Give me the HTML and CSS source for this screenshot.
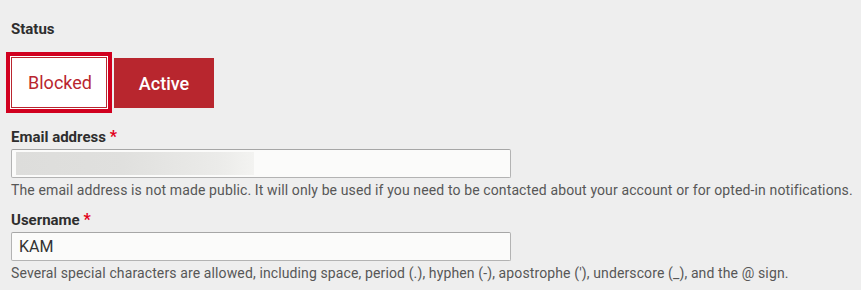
FILE: index.html
```html
<!DOCTYPE html>
<html lang="en">
<head>
<meta charset="utf-8">
<title>Account</title>
<link rel="stylesheet" href="styles.css">
</head>
<body>
<form class="form">
  <div class="field">
    <div class="label">Status</div>
    <div class="toggle">
      <button type="button" class="btn btn-blocked">Blocked</button>
      <button type="button" class="btn btn-active">Active</button>
    </div>
  </div>
  <div class="field field-email">
    <label class="label">Email address <span class="req">*</span></label>
    <div class="input"><span class="redacted"></span></div>
    <div class="desc">The email address is not made public. It will only be used if you need to be contacted about your account or for opted-in notifications.</div>
  </div>
  <div class="field field-user">
    <label class="label">Username <span class="req">*</span></label>
    <div class="input"><span class="value">KAM</span></div>
    <div class="desc">Several special characters are allowed, including space, period (.), hyphen (-), apostrophe ('), underscore (_), and the @ sign.</div>
  </div>
</form>
</body>
</html>
```

FILE: styles.css
```css
html, body {
  margin: 0;
  padding: 0;
  background: #eeeeee;
}
body {
  font-family: Roboto, "Liberation Sans", sans-serif;
  color: #2d2d2d;
}
.form {
  padding: 19px 11px 0 11px;
}
.label {
  display: block;
  font-size: 15px;
  line-height: 20px;
  font-weight: 700;
  color: #2e2e2e;
}
.req {
  color: #e2001a;
  font-size: 16px;
}
.toggle {
  display: flex;
  align-items: flex-end;
  gap: 7px;
  margin-top: 18px;
}
.btn {
  box-sizing: border-box;
  font-family: Roboto, "Liberation Sans", sans-serif;
  font-size: 18px;
  padding: 0;
  margin: 0;
  cursor: pointer;
}
.btn-blocked {
  width: 96px;
  height: 51px;
  background: #ffffff;
  color: #b9262f;
  border: 1px solid #b9262f;
  font-weight: 400;
  padding-left: 2px;
  outline: 4px solid #d1001f;
  outline-offset: 1px;
  box-shadow: 0 0 0 1px #ffffff;
}
.btn-active {
  width: 100px;
  height: 50px;
  background: #b8262e;
  color: #ffffff;
  border: none;
  font-weight: 500;
}
.field-email {
  margin-top: 19px;
}
.field-user {
  margin-top: 10px;
}
.input {
  box-sizing: border-box;
  width: 500px;
  height: 29px;
  margin-top: 2px;
  background: #fbfbfa;
  border: 1px solid #b3b3b3;
  border-top-color: #a6a6a6;
  border-radius: 2px;
  display: flex;
  align-items: center;
  padding: 0 4px;
}
.redacted {
  display: block;
  width: 238px;
  height: 23px;
  background: linear-gradient(to right, #dddddb 0%, #e0e0de 45%, #ebebe9 85%, #f3f3f1 100%);
}
.value {
  font-size: 16px;
  color: #333333;
  padding-left: 3px;
}
.desc {
  margin-top: 2px;
  font-size: 14px;
  line-height: 20px;
  letter-spacing: 0.12px;
  color: #575757;
  white-space: nowrap;
}
```
